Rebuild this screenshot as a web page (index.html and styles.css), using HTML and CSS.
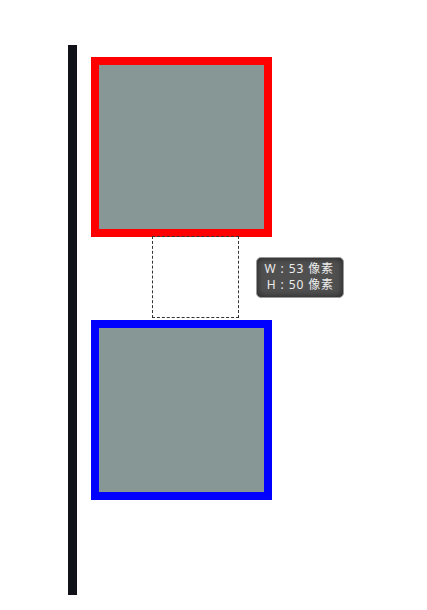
FILE: index.html
```html
<!DOCTYPE html>
<html lang="zh">
<head>
    <meta charset="UTF-8">
    <meta name="viewport" content="width=device-width, initial-scale=1.0">
    <title>间距测量</title>
    <link rel="stylesheet" href="styles.css">
</head>
<body>
    <div class="stage">
        <div class="rule"></div>

        <div class="stack">
            <div class="box box-red"></div>

            <div class="gap-row">
                <div class="measure"></div>
                <div class="tip">
                    <div>W : 53 像素</div>
                    <div>H : 50 像素</div>
                </div>
            </div>

            <div class="box box-blue"></div>
        </div>
    </div>
</body>
</html>
```

FILE: styles.css
```css
body {
    margin: 0;
    background: #ffffff;
    font-family: 'Noto Sans', 'Noto Sans CJK SC', sans-serif;
}
.stage {
    display: flex;
    padding: 45px 0 0 68px;
}
.rule {
    width: 9px;
    height: 550px;
    background: #111118;
}
.stack {
    display: flex;
    flex-direction: column;
    margin: 12px 0 0 14px;
}
.box {
    box-sizing: border-box;
    width: 181px;
    height: 180px;
    border: 8px solid red;
    background: #879795;
}
.box-blue {
    border-color: blue;
}
.gap-row {
    display: flex;
    align-items: center;
    height: 83px;
}
.measure {
    box-sizing: border-box;
    align-self: flex-start;
    width: 87px;
    height: 82px;
    margin: -1px 0 0 61px;
    border: 1px dashed #333;
}
.tip {
    box-sizing: border-box;
    width: 88px;
    height: 41px;
    margin: -3px 0 0 17px;
    padding: 3px 9px 0 0;
    border: 1px solid #9a9a9a;
    border-radius: 5px;
    background: #505050;
    box-shadow: inset 0 0 7px rgba(0, 0, 0, 0.6);
    color: #ececec;
    font-size: 12px;
    line-height: 16px;
    text-align: right;
    letter-spacing: 0.9px;
}
```
